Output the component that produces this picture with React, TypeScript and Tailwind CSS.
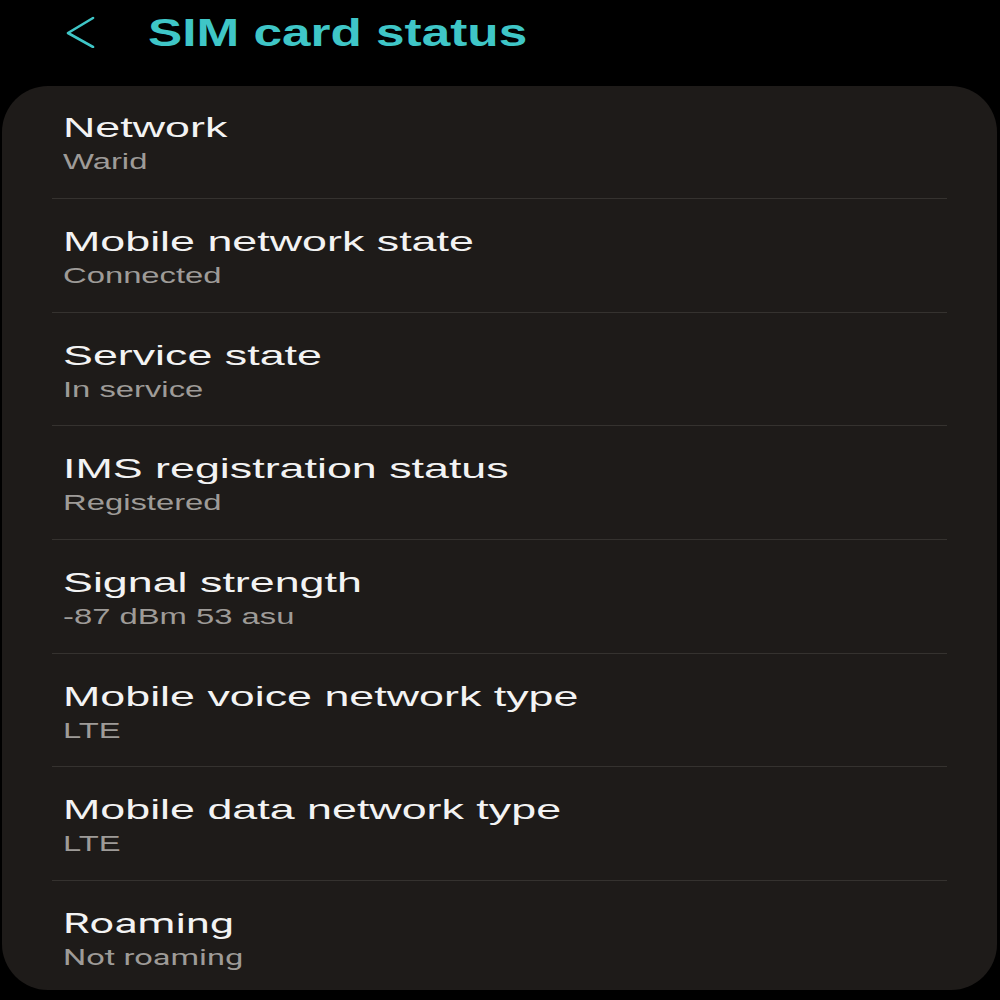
import React from "react";

const rows: { title: string; value: string }[] = [
  { title: "Network", value: "Warid" },
  { title: "Mobile network state", value: "Connected" },
  { title: "Service state", value: "In service" },
  { title: "IMS registration status", value: "Registered" },
  { title: "Signal strength", value: "-87 dBm 53 asu" },
  { title: "Mobile voice network type", value: "LTE" },
  { title: "Mobile data network type", value: "LTE" },
  { title: "Roaming", value: "Not roaming" },
];

export default function App() {
  return (
    <div
      className="h-[1000px] w-[1000px] overflow-hidden bg-black"
      style={{ fontFamily: '"Liberation Sans", Arial, sans-serif' }}
    >
      {/* Header */}
      <div className="flex h-[86px] items-start">
        <svg
          className="ml-[66px] mt-[16px]"
          width="30"
          height="32"
          viewBox="0 0 30 32"
          fill="none"
        >
          <polyline
            points="27,2 2,17 27,31"
            stroke="#3fc6c7"
            strokeWidth="2.6"
            strokeLinecap="round"
            strokeLinejoin="round"
          />
        </svg>
        <div className="ml-[52px] mt-[14px]">
          <span className="block origin-left scale-x-[1.35] whitespace-nowrap text-[38px] font-bold leading-[38px] text-[#3fc6c7]">
            SIM card status
          </span>
        </div>
      </div>

      {/* Card */}
      <div className="ml-[2px] h-[904px] w-[995px] rounded-[46px] bg-[#1e1b19]">
        {rows.map((r, i) => {
          const last = i === rows.length - 1;
          return (
            <div
              key={r.title}
              className={
                i === 0
                  ? "mx-[50px] h-[112px] px-[11px] pt-[26px]"
                  : "mx-[50px] h-[113.67px] border-t border-[#35322f] px-[11px] pt-[27px]"
              }
              style={last ? { fontFamily: 'Roboto, "Liberation Sans", sans-serif' } : undefined}
            >
              <span
                className={
                  last
                    ? "block origin-left scale-x-[1.54] whitespace-nowrap text-[28px] leading-[32px] text-[#f3f3f3]"
                    : "block origin-left scale-x-[1.6] whitespace-nowrap text-[28px] leading-[32px] text-[#f3f3f3]"
                }
              >
                {r.title}
              </span>
              <span
                className={
                  last
                    ? "mt-[5px] block origin-left scale-x-[1.48] whitespace-nowrap text-[22px] leading-[26px] text-[#9e9b98]"
                    : "mt-[5px] block origin-left scale-x-[1.49] whitespace-nowrap text-[22px] leading-[26px] text-[#9e9b98]"
                }
              >
                {r.value}
              </span>
            </div>
          );
        })}
      </div>
    </div>
  );
}
